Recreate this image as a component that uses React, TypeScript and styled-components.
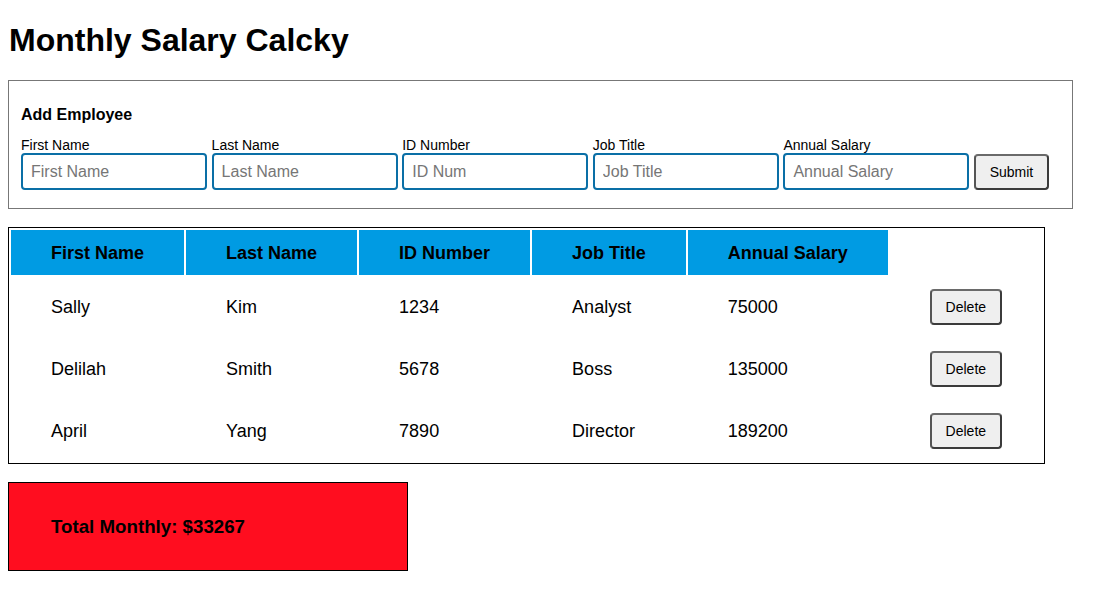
import React from 'react'
import styled, { createGlobalStyle } from 'styled-components'

const GlobalStyle = createGlobalStyle`
  body {
    margin: 0;
    font-family: "Liberation Sans", Arial, Helvetica, sans-serif;
    color: #000;
    background: #fff;
  }
`;

interface Employee {
    firstName: string;
    lastName: string;
    id: string;
    title: string;
    salary: number;
}

const employees: Employee[] = [
    { firstName: 'Sally', lastName: 'Kim', id: '1234', title: 'Analyst', salary: 75000 },
    { firstName: 'Delilah', lastName: 'Smith', id: '5678', title: 'Boss', salary: 135000 },
    { firstName: 'April', lastName: 'Yang', id: '7890', title: 'Director', salary: 189200 },
];

const fields = [
    { label: 'First Name', placeholder: 'First Name' },
    { label: 'Last Name', placeholder: 'Last Name' },
    { label: 'ID Number', placeholder: 'ID Num' },
    { label: 'Job Title', placeholder: 'Job Title' },
    { label: 'Annual Salary', placeholder: 'Annual Salary' },
];

function App() {
    const total = Math.round(employees.reduce((sum, e) => sum + e.salary, 0) / 12);

    return (
    <Page>
        <GlobalStyle />
        <Title>Monthly Salary Calcky</Title>

        <FormBox>
            <FormHeading>Add Employee</FormHeading>
            <FormRow>
                {fields.map(f => (
                    <Field key={f.label}>
                        <Label>{f.label}</Label>
                        <Input placeholder={f.placeholder} />
                    </Field>
                ))}
                <GrayButton $w={75}>Submit</GrayButton>
            </FormRow>
        </FormBox>

        <Table>
            <thead>
                <tr>
                    <Th>First Name</Th>
                    <Th>Last Name</Th>
                    <Th>ID Number</Th>
                    <Th>Job Title</Th>
                    <Th>Annual Salary</Th>
                    <Th $empty></Th>
                </tr>
            </thead>
            <tbody>
                {employees.map(e => (
                    <tr key={e.id}>
                        <Td>{e.firstName}</Td>
                        <Td>{e.lastName}</Td>
                        <Td>{e.id}</Td>
                        <Td>{e.title}</Td>
                        <Td>{e.salary}</Td>
                        <Td><GrayButton $w={72}>Delete</GrayButton></Td>
                    </tr>
                ))}
            </tbody>
        </Table>

        <TotalBox>Total Monthly: ${total}</TotalBox>
    </Page>
  )
}

export default App

const Page = styled.div`
  padding: 22px 8px 8px;
`;

const Title = styled.h1`
  margin: 0 0 21px 1px;
  font-size: 32px;
  line-height: 37px;
  font-weight: bold;
`;

const FormBox = styled.div`
  width: fit-content;
  border: 1px solid #777;
  padding: 25px 23px 18px 12px;
  margin-bottom: 18px;
`;

const FormHeading = styled.h3`
  margin: 0 0 13px;
  font-size: 16px;
  line-height: 18px;
  font-weight: bold;
`;

const FormRow = styled.div`
  display: flex;
  align-items: flex-end;
  gap: 4.6px;
`;

const Field = styled.div`
  display: flex;
  flex-direction: column;
`;

const Label = styled.label`
  font-size: 14px;
  line-height: 16px;
`;

const Input = styled.input`
  box-sizing: border-box;
  width: 186px;
  height: 37px;
  margin: 0;
  padding: 0 8px;
  border: 2px solid #0a6fa6;
  border-radius: 4px;
  font-family: "Liberation Sans", Arial, sans-serif;
  font-size: 16px;
  color: #000;
  outline: none;

  &::placeholder {
    color: #767676;
  }
`;

const GrayButton = styled.button<{ $w: number }>`
  box-sizing: border-box;
  width: ${p => p.$w}px;
  height: 36px;
  margin: 0;
  padding: 0;
  background: #efefef;
  border: 2px solid #3b3b3b;
  border-top-color: #6a6a6a;
  border-left-color: #555;
  border-radius: 4px;
  font-family: "Liberation Sans", Arial, sans-serif;
  font-size: 14px;
  color: #000;
`;

const Table = styled.table`
  border: 1px solid #000;
  border-spacing: 2px;
  margin-bottom: 18px;
  font-size: 18px;
`;

const Th = styled.th<{ $empty?: boolean }>`
  background: ${p => (p.$empty ? 'transparent' : '#009be3')};
  padding: 13px 40px 11px;
  line-height: 21px;
  font-weight: bold;
  text-align: left;
`;

const Td = styled.td`
  padding: 12px 40px;
  line-height: 23px;
  text-align: left;
  vertical-align: middle;
`;

const TotalBox = styled.div`
  box-sizing: border-box;
  width: 400px;
  height: 89px;
  padding: 33px 42px;
  background: #ff0d1f;
  border: 1px solid #000;
  font-size: 18.72px;
  line-height: 21px;
  font-weight: bold;
`;
